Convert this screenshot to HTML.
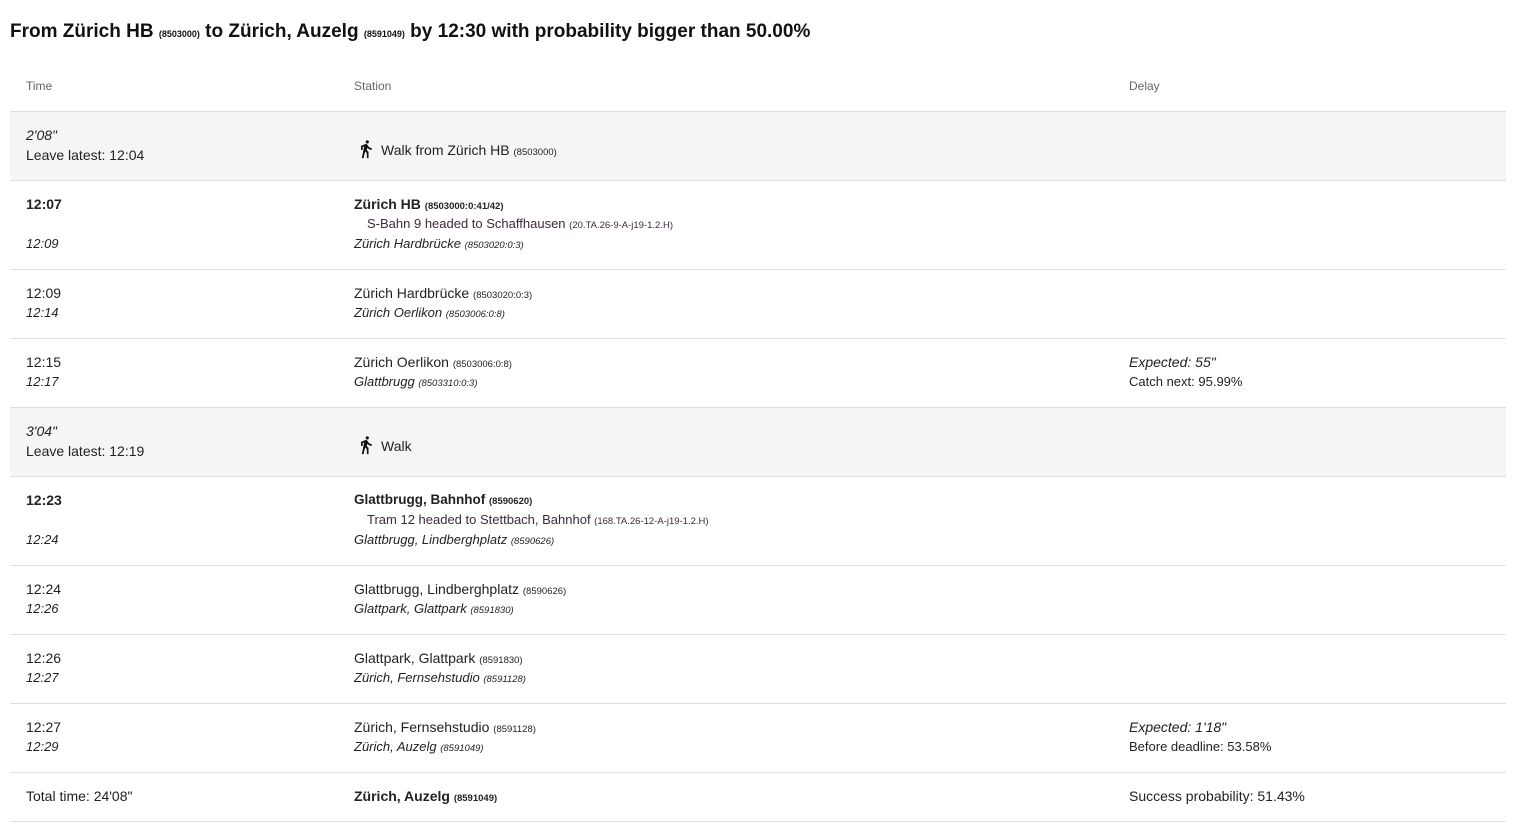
<!DOCTYPE html>
<html><head><meta charset="utf-8"><style>
*{margin:0;padding:0;box-sizing:border-box}
body{width:1516px;height:826px;background:#fff;font-family:"Liberation Sans",Arial,sans-serif;color:#222;position:relative;overflow:hidden;font-size:14px}
.a{position:absolute;white-space:nowrap;line-height:20px}
.h1{position:absolute;left:10px;top:20px;font-size:19px;font-weight:bold;color:#111;line-height:24px;white-space:nowrap}
.h1 small{font-size:9px;font-weight:bold}
.s{font-size:9.5px}
.i{font-style:italic}
.b{font-weight:bold}
.hd{color:#666;font-size:12px}
.row{position:absolute;left:10px;width:1496px;border-bottom:1px solid #e0e0e0}
.g{background:#f5f5f5}
.tr{color:#3a2a3a}
</style></head><body>
<div class="h1">From Zürich HB <small>(8503000)</small> to Zürich, Auzelg <small>(8591049)</small> by 12:30 with probability bigger than 50.00%</div>
<div class="row" style="top:60px;height:52px"></div>
<div class="row g" style="top:112px;height:69px"></div>
<div class="row" style="top:181px;height:89px"></div>
<div class="row" style="top:270px;height:69px"></div>
<div class="row" style="top:339px;height:69px"></div>
<div class="row g" style="top:408px;height:69px"></div>
<div class="row" style="top:477px;height:89px"></div>
<div class="row" style="top:566px;height:69px"></div>
<div class="row" style="top:635px;height:69px"></div>
<div class="row" style="top:704px;height:69px"></div>
<div class="row" style="top:773px;height:49px"></div>

<div class="a hd" style="left:26px;top:76px">Time</div>
<div class="a hd" style="left:354px;top:76px">Station</div>
<div class="a hd" style="left:1129px;top:76px">Delay</div>

<svg style="position:absolute;left:356px;top:138px" width="20" height="22" viewBox="0 0 24 24"><path fill="#111" d="M13.5 5.5c1.1 0 2-.9 2-2s-.9-2-2-2-2 .9-2 2 .9 2 2 2zM9.8 8.9L7 23h2.1l1.8-8 2.1 2v6h2v-7.5l-2.1-2 .6-3C14.8 12 16.8 13 19 13v-2c-1.9 0-3.5-1-4.3-2.4l-1-1.6c-.4-.6-1-1-1.7-1-.3 0-.5.1-.8.1L6 8.3V13h2V9.6l1.8-.7"/></svg>
<div class="a i" style="left:26px;top:125px">2'08"</div>
<div class="a" style="left:26px;top:145px">Leave latest: 12:04</div>
<div class="a" style="left:381px;top:140px">Walk from Zürich HB <span class="s">(8503000)</span></div>

<div class="a b" style="left:26px;top:194px">12:07</div>
<div class="a i" style="left:26px;top:234px;font-size:13px">12:09</div>
<div class="a" style="left:354px;top:194px"><b>Zürich HB</b> <span class="s b">(8503000:0:41/42)</span></div>
<div class="a tr" style="left:367px;top:214px;font-size:13px">S-Bahn 9 headed to Schaffhausen <span class="s">(20.TA.26-9-A-j19-1.2.H)</span></div>
<div class="a i" style="left:354px;top:234px;font-size:13px">Zürich Hardbrücke <span class="s">(8503020:0:3)</span></div>

<div class="a" style="left:26px;top:283px">12:09</div>
<div class="a i" style="left:26px;top:303px;font-size:13px">12:14</div>
<div class="a" style="left:354px;top:283px">Zürich Hardbrücke <span class="s">(8503020:0:3)</span></div>
<div class="a i" style="left:354px;top:303px;font-size:13px">Zürich Oerlikon <span class="s">(8503006:0:8)</span></div>

<div class="a" style="left:26px;top:352px">12:15</div>
<div class="a i" style="left:26px;top:372px;font-size:13px">12:17</div>
<div class="a" style="left:354px;top:352px">Zürich Oerlikon <span class="s">(8503006:0:8)</span></div>
<div class="a i" style="left:354px;top:372px;font-size:13px">Glattbrugg <span class="s">(8503310:0:3)</span></div>
<div class="a i" style="left:1129px;top:352px">Expected: 55"</div>
<div class="a" style="left:1129px;top:372px;font-size:13px">Catch next: 95.99%</div>

<svg style="position:absolute;left:356px;top:434px" width="20" height="22" viewBox="0 0 24 24"><path fill="#111" d="M13.5 5.5c1.1 0 2-.9 2-2s-.9-2-2-2-2 .9-2 2 .9 2 2 2zM9.8 8.9L7 23h2.1l1.8-8 2.1 2v6h2v-7.5l-2.1-2 .6-3C14.8 12 16.8 13 19 13v-2c-1.9 0-3.5-1-4.3-2.4l-1-1.6c-.4-.6-1-1-1.7-1-.3 0-.5.1-.8.1L6 8.3V13h2V9.6l1.8-.7"/></svg>
<div class="a i" style="left:26px;top:421px">3'04"</div>
<div class="a" style="left:26px;top:441px">Leave latest: 12:19</div>
<div class="a" style="left:381px;top:436px">Walk</div>

<div class="a b" style="left:26px;top:490px">12:23</div>
<div class="a i" style="left:26px;top:530px;font-size:13px">12:24</div>
<div class="a" style="left:354px;top:490px;font-size:13.5px"><b>Glattbrugg, Bahnhof</b> <span class="s b">(8590620)</span></div>
<div class="a tr" style="left:367px;top:510px;font-size:13px">Tram 12 headed to Stettbach, Bahnhof <span class="s">(168.TA.26-12-A-j19-1.2.H)</span></div>
<div class="a i" style="left:354px;top:530px;font-size:13px">Glattbrugg, Lindberghplatz <span class="s">(8590626)</span></div>

<div class="a" style="left:26px;top:579px">12:24</div>
<div class="a i" style="left:26px;top:599px;font-size:13px">12:26</div>
<div class="a" style="left:354px;top:579px">Glattbrugg, Lindberghplatz <span class="s">(8590626)</span></div>
<div class="a i" style="left:354px;top:599px;font-size:13px">Glattpark, Glattpark <span class="s">(8591830)</span></div>

<div class="a" style="left:26px;top:648px">12:26</div>
<div class="a i" style="left:26px;top:668px;font-size:13px">12:27</div>
<div class="a" style="left:354px;top:648px">Glattpark, Glattpark <span class="s">(8591830)</span></div>
<div class="a i" style="left:354px;top:668px;font-size:13px">Zürich, Fernsehstudio <span class="s">(8591128)</span></div>

<div class="a" style="left:26px;top:717px">12:27</div>
<div class="a i" style="left:26px;top:737px;font-size:13px">12:29</div>
<div class="a" style="left:354px;top:717px">Zürich, Fernsehstudio <span class="s">(8591128)</span></div>
<div class="a i" style="left:354px;top:737px;font-size:13px">Zürich, Auzelg <span class="s">(8591049)</span></div>
<div class="a i" style="left:1129px;top:717px">Expected: 1'18"</div>
<div class="a" style="left:1129px;top:737px;font-size:13px">Before deadline: 53.58%</div>

<div class="a" style="left:26px;top:786px">Total time: 24'08"</div>
<div class="a" style="left:354px;top:786px"><b>Zürich, Auzelg</b> <span class="s b">(8591049)</span></div>
<div class="a" style="left:1129px;top:786px">Success probability: 51.43%</div>
</body></html>
